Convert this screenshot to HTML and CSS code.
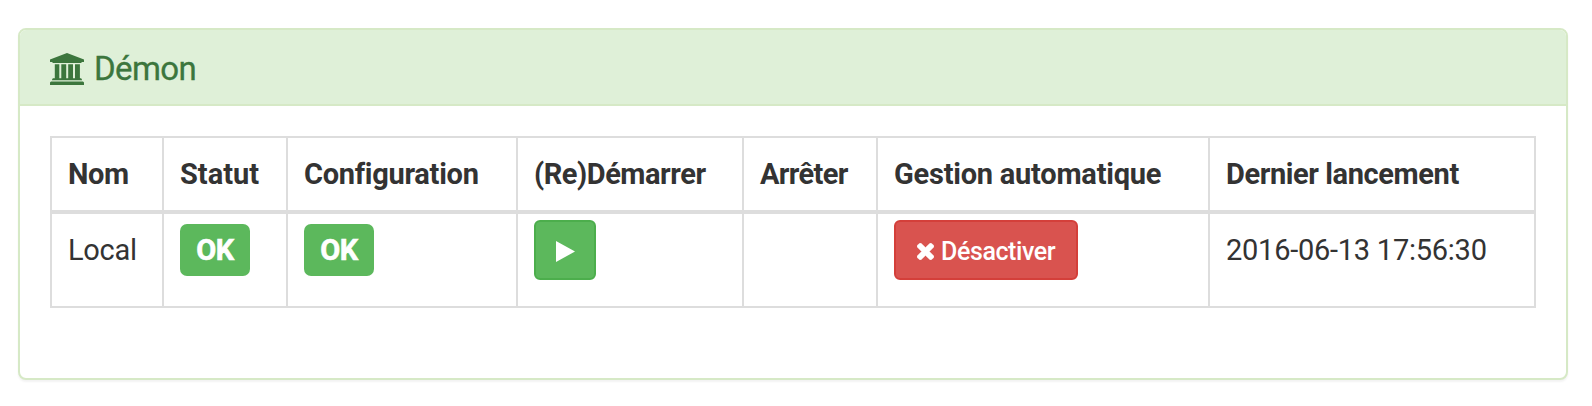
FILE: index.html
```html
<!DOCTYPE html>
<html lang="fr">
<head>
<meta charset="utf-8">
<title>Démon</title>
<link rel="stylesheet" href="styles.css">
</head>
<body>
<section class="panel">
  <header class="panel-heading">
    <svg class="icon-bank" viewBox="0 0 34 32"><path d="M17 0L34 6.500V9H31.500V10H2.500V9H0V6.500zM4.800 11.200H9.300V25.300H11.300V11.200H16.200V25.300H18.200V11.200H23V25.300H25V11.200H29.900V25.300H31Q32 25.800 32 27.300H2Q2 25.800 3 25.300H4.800zM1 28.500H33L34 29.500V32H0V29.500z"/></svg>
    <h3 class="panel-title">Démon</h3>
  </header>
  <div class="panel-body">
    <table class="table">
      <colgroup><col class="c-name"><col class="c-status"><col class="c-config"><col class="c-start"><col class="c-stop"><col class="c-auto"><col class="c-last"></colgroup>
      <thead>
        <tr><th><span class="t-nom">Nom</span></th><th>Statut</th><th><span class="t-config">Configuration</span></th><th><span class="t-start">(Re)Démarrer</span></th><th><span class="t-stop">Arrêter</span></th><th><span class="t-auto">Gestion automatique</span></th><th><span class="t-last">Dernier lancement</span></th></tr>
      </thead>
      <tbody>
        <tr>
          <td><span class="t-local">Local</span></td>
          <td><span class="label">OK</span></td>
          <td><span class="label">OK</span></td>
          <td><button class="btn btn-success" aria-label="Démarrer"><svg class="icon-play" viewBox="0 0 19 21"><path d="M0 0L19 10.500L0 21z"/></svg></button></td>
          <td></td>
          <td><button class="btn btn-danger"><svg class="icon-times" viewBox="110 238 1188 1188"><path d="M1298 1194q0 40-28 68l-136 136q-28 28-68 28t-68-28l-294-294-294 294q-28 28-68 28t-68-28l-136-136q-28-28-28-68t28-68l294-294-294-294q-28-28-28-68t28-68l136-136q28-28 68-28t68 28l294 294 294-294q28-28 68-28t68 28l136 136q28 28 28 68t-28 68l-294 294 294 294q28 28 28 68z"/></svg><span class="t-off">Désactiver</span></button></td>
          <td><span class="t-date">2016-06-13 17:56:30</span></td>
        </tr>
      </tbody>
    </table>
  </div>
</section>
</body>
</html>
```
FILE: styles.css
```css
* { box-sizing: border-box; }
body { margin: 0; padding: 28px 24px 26px 18px; background: #fff; color: #333; font: 29px/40px Roboto, sans-serif; }
.panel { height: 352px; border: 2px solid #d6e9c6; border-radius: 8px; background: #fff; box-shadow: 0 2px 2px rgba(0,0,0,.05); }
.panel-heading { display: flex; align-items: center; height: 76px; padding: 3px 0 0 30px; border-bottom: 2px solid #d6e9c6; border-radius: 6px 6px 0 0; background: #dff0d8; color: #3c763d; }
.panel-title { margin: 0 0 0 10px; font-size: 33px; line-height: 36px; font-weight: 400; letter-spacing: -.6px; -webkit-text-stroke: .3px; }
.panel-body { padding: 30px; }
svg { display: block; fill: currentColor; flex: none; }
.icon-bank { width: 34px; height: 32px; }
.table { width: 1486px; table-layout: fixed; border-collapse: separate; border-spacing: 0; border: solid #ddd; border-width: 2px 2px 2px 0; }
.c-name { width: 112px; }
.c-status { width: 124px; }
.c-config { width: 230px; }
.c-start { width: 226px; }
.c-stop { width: 134px; }
.c-auto { width: 332px; }
.c-last { width: 326px; }
th, td { padding: 0 0 0 16px; border-left: 2px solid #ddd; text-align: left; vertical-align: top; white-space: nowrap; }
th { height: 76px; padding-top: 16px; border-bottom: 4px solid #ddd; font-weight: 700; }
td { height: 92px; padding-top: 16px; }
td:has(.label) { padding-top: 10px; }
td:has(.btn) { padding-top: 6px; }
.t-nom { letter-spacing: -.4px; }
.t-config { letter-spacing: -.28px; }
.t-start { letter-spacing: -.45px; }
.t-stop { letter-spacing: -.65px; }
.t-auto { letter-spacing: -.23px; }
.t-last { letter-spacing: -.4px; }
.t-local { letter-spacing: -.3px; }
.t-date { letter-spacing: -.25px; }
.label { display: block; width: 70px; height: 52px; border-radius: 7px; background: #5cb85c; color: #fff; font-weight: 700; line-height: 52px; text-align: center; letter-spacing: -.5px; -webkit-text-stroke: .6px; }
.btn { display: flex; align-items: center; height: 60px; margin: 0; border: 2px solid; border-radius: 6px; color: #fff; font: 500 25px/36px Roboto, sans-serif; }
.btn-success { width: 62px; padding: 3px 0 0 20px; border-color: #4cae4c; background: #5cb85c; }
.btn-danger { width: 184px; padding: 3px 0 0 21px; border-color: #d43f3a; background: #d9534f; letter-spacing: -.4px; }
.icon-play { width: 19px; height: 21px; }
.icon-times { width: 17px; height: 17px; margin: 0 7px 0 0; stroke: currentColor; stroke-width: 30; }
```
